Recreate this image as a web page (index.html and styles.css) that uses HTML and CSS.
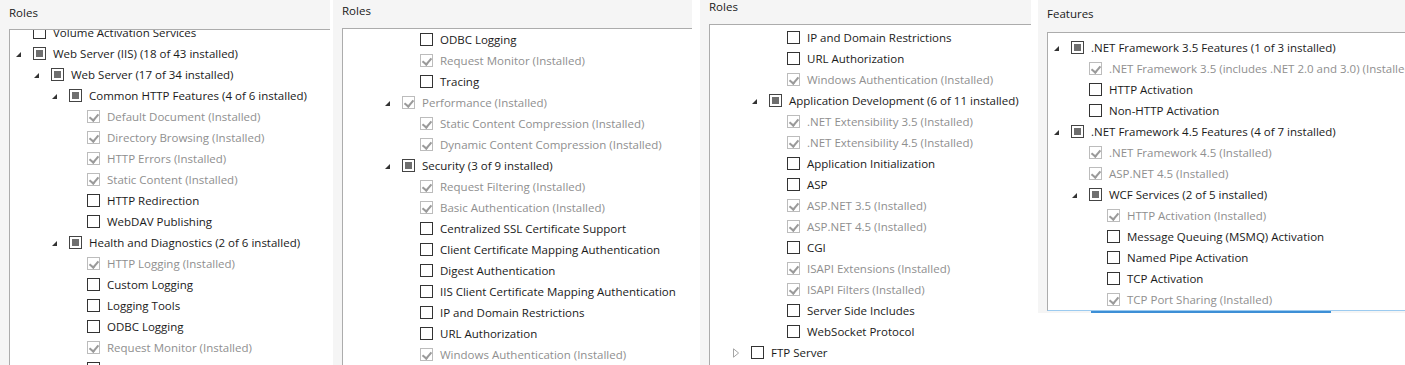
FILE: index.html
```html
<!DOCTYPE html>
<html>
<head>
<meta charset="utf-8">
<link rel="stylesheet" href="styles.css">
</head>
<body>
<div class="strip">

  <section class="panel p1">
    <div class="title">Roles</div>
    <div class="box">
      <ul class="tree">
        <li class="row l1"><span class="exp"></span><span class="cb"></span><span class="txt">Volume Activation Services</span></li>
        <li class="row l1"><span class="exp open"></span><span class="cb ind"></span><span class="txt">Web Server (IIS) (18 of 43 installed)</span></li>
        <li class="row l2"><span class="exp open"></span><span class="cb ind"></span><span class="txt">Web Server (17 of 34 installed)</span></li>
        <li class="row l3"><span class="exp open"></span><span class="cb ind"></span><span class="txt">Common HTTP Features (4 of 6 installed)</span></li>
        <li class="row l4 off"><span class="exp"></span><span class="cb chk"></span><span class="txt">Default Document (Installed)</span></li>
        <li class="row l4 off"><span class="exp"></span><span class="cb chk"></span><span class="txt">Directory Browsing (Installed)</span></li>
        <li class="row l4 off"><span class="exp"></span><span class="cb chk"></span><span class="txt">HTTP Errors (Installed)</span></li>
        <li class="row l4 off"><span class="exp"></span><span class="cb chk"></span><span class="txt">Static Content (Installed)</span></li>
        <li class="row l4"><span class="exp"></span><span class="cb"></span><span class="txt">HTTP Redirection</span></li>
        <li class="row l4"><span class="exp"></span><span class="cb"></span><span class="txt">WebDAV Publishing</span></li>
        <li class="row l3"><span class="exp open"></span><span class="cb ind"></span><span class="txt">Health and Diagnostics (2 of 6 installed)</span></li>
        <li class="row l4 off"><span class="exp"></span><span class="cb chk"></span><span class="txt">HTTP Logging (Installed)</span></li>
        <li class="row l4"><span class="exp"></span><span class="cb"></span><span class="txt">Custom Logging</span></li>
        <li class="row l4"><span class="exp"></span><span class="cb"></span><span class="txt">Logging Tools</span></li>
        <li class="row l4"><span class="exp"></span><span class="cb"></span><span class="txt">ODBC Logging</span></li>
        <li class="row l4 off"><span class="exp"></span><span class="cb chk"></span><span class="txt">Request Monitor (Installed)</span></li>
        <li class="row l4"><span class="exp"></span><span class="cb"></span><span class="txt">Tracing</span></li>
      </ul>
    </div>
  </section>

  <section class="panel p2">
    <div class="title">Roles</div>
    <div class="box">
      <ul class="tree">
        <li class="row l4"><span class="exp"></span><span class="cb"></span><span class="txt">ODBC Logging</span></li>
        <li class="row l4 off"><span class="exp"></span><span class="cb chk"></span><span class="txt">Request Monitor (Installed)</span></li>
        <li class="row l4"><span class="exp"></span><span class="cb"></span><span class="txt">Tracing</span></li>
        <li class="row l3 off"><span class="exp open"></span><span class="cb chk"></span><span class="txt">Performance (Installed)</span></li>
        <li class="row l4 off"><span class="exp"></span><span class="cb chk"></span><span class="txt">Static Content Compression (Installed)</span></li>
        <li class="row l4 off"><span class="exp"></span><span class="cb chk"></span><span class="txt">Dynamic Content Compression (Installed)</span></li>
        <li class="row l3"><span class="exp open"></span><span class="cb ind"></span><span class="txt">Security (3 of 9 installed)</span></li>
        <li class="row l4 off"><span class="exp"></span><span class="cb chk"></span><span class="txt">Request Filtering (Installed)</span></li>
        <li class="row l4 off"><span class="exp"></span><span class="cb chk"></span><span class="txt">Basic Authentication (Installed)</span></li>
        <li class="row l4"><span class="exp"></span><span class="cb"></span><span class="txt">Centralized SSL Certificate Support</span></li>
        <li class="row l4"><span class="exp"></span><span class="cb"></span><span class="txt">Client Certificate Mapping Authentication</span></li>
        <li class="row l4"><span class="exp"></span><span class="cb"></span><span class="txt">Digest Authentication</span></li>
        <li class="row l4"><span class="exp"></span><span class="cb"></span><span class="txt">IIS Client Certificate Mapping Authentication</span></li>
        <li class="row l4"><span class="exp"></span><span class="cb"></span><span class="txt">IP and Domain Restrictions</span></li>
        <li class="row l4"><span class="exp"></span><span class="cb"></span><span class="txt">URL Authorization</span></li>
        <li class="row l4 off"><span class="exp"></span><span class="cb chk"></span><span class="txt">Windows Authentication (Installed)</span></li>
      </ul>
    </div>
  </section>

  <section class="panel p3">
    <div class="title">Roles</div>
    <div class="box">
      <ul class="tree">
        <li class="row l4"><span class="exp"></span><span class="cb"></span><span class="txt">IP and Domain Restrictions</span></li>
        <li class="row l4"><span class="exp"></span><span class="cb"></span><span class="txt">URL Authorization</span></li>
        <li class="row l4 off"><span class="exp"></span><span class="cb chk"></span><span class="txt">Windows Authentication (Installed)</span></li>
        <li class="row l3"><span class="exp open"></span><span class="cb ind"></span><span class="txt">Application Development (6 of 11 installed)</span></li>
        <li class="row l4 off"><span class="exp"></span><span class="cb chk"></span><span class="txt">.NET Extensibility 3.5 (Installed)</span></li>
        <li class="row l4 off"><span class="exp"></span><span class="cb chk"></span><span class="txt">.NET Extensibility 4.5 (Installed)</span></li>
        <li class="row l4"><span class="exp"></span><span class="cb"></span><span class="txt">Application Initialization</span></li>
        <li class="row l4"><span class="exp"></span><span class="cb"></span><span class="txt">ASP</span></li>
        <li class="row l4 off"><span class="exp"></span><span class="cb chk"></span><span class="txt">ASP.NET 3.5 (Installed)</span></li>
        <li class="row l4 off"><span class="exp"></span><span class="cb chk"></span><span class="txt">ASP.NET 4.5 (Installed)</span></li>
        <li class="row l4"><span class="exp"></span><span class="cb"></span><span class="txt">CGI</span></li>
        <li class="row l4 off"><span class="exp"></span><span class="cb chk"></span><span class="txt">ISAPI Extensions (Installed)</span></li>
        <li class="row l4 off"><span class="exp"></span><span class="cb chk"></span><span class="txt">ISAPI Filters (Installed)</span></li>
        <li class="row l4"><span class="exp"></span><span class="cb"></span><span class="txt">Server Side Includes</span></li>
        <li class="row l4"><span class="exp"></span><span class="cb"></span><span class="txt">WebSocket Protocol</span></li>
        <li class="row l2"><span class="exp closed"><svg width="7" height="10" viewBox="0 0 7 10"><path d="M0.5 0.8 L5.6 5 L0.5 9.2 Z" fill="none" stroke="#a4a4a4" stroke-width="1"/></svg></span><span class="cb"></span><span class="txt">FTP Server</span></li>
      </ul>
    </div>
  </section>

  <section class="panel p4">
    <div class="title">Features</div>
    <div class="box">
      <ul class="tree">
        <li class="row l1"><span class="exp open"></span><span class="cb ind"></span><span class="txt">.NET Framework 3.5 Features (1 of 3 installed)</span></li>
        <li class="row l2 off"><span class="exp"></span><span class="cb chk"></span><span class="txt">.NET Framework 3.5 (includes .NET 2.0 and 3.0) (Installed)</span></li>
        <li class="row l2"><span class="exp"></span><span class="cb"></span><span class="txt">HTTP Activation</span></li>
        <li class="row l2"><span class="exp"></span><span class="cb"></span><span class="txt">Non-HTTP Activation</span></li>
        <li class="row l1"><span class="exp open"></span><span class="cb ind"></span><span class="txt">.NET Framework 4.5 Features (4 of 7 installed)</span></li>
        <li class="row l2 off"><span class="exp"></span><span class="cb chk"></span><span class="txt">.NET Framework 4.5 (Installed)</span></li>
        <li class="row l2 off"><span class="exp"></span><span class="cb chk"></span><span class="txt">ASP.NET 4.5 (Installed)</span></li>
        <li class="row l2"><span class="exp open"></span><span class="cb ind"></span><span class="txt">WCF Services (2 of 5 installed)</span></li>
        <li class="row l3 off"><span class="exp"></span><span class="cb chk"></span><span class="txt">HTTP Activation (Installed)</span></li>
        <li class="row l3"><span class="exp"></span><span class="cb"></span><span class="txt">Message Queuing (MSMQ) Activation</span></li>
        <li class="row l3"><span class="exp"></span><span class="cb"></span><span class="txt">Named Pipe Activation</span></li>
        <li class="row l3"><span class="exp"></span><span class="cb"></span><span class="txt">TCP Activation</span></li>
        <li class="row l3 off"><span class="exp"></span><span class="cb chk"></span><span class="txt">TCP Port Sharing (Installed)</span></li>
      </ul>
    </div>
    <div class="focusbar"></div>
  </section>

</div>
</body>
</html>
```

FILE: styles.css
```css
* { box-sizing: border-box; }
html, body { margin: 0; padding: 0; background: #ffffff; }
body {
  font-family: "Segoe UI", "Open Sans", "Noto Sans", sans-serif;
  font-size: 11.5px;
  color: #1a1a1a;
  width: 1405px;
  height: 365px;
  overflow: hidden;
}
.strip { display: flex; align-items: flex-start; height: 365px; }

.panel {
  background: #f5f5f5;
  padding-left: 9px;
  overflow: hidden;
  display: flex;
  flex-direction: column;
}
.p1 { width: 330px; height: 365px; padding-top: 5px; }
.p2 { width: 359px; height: 365px; margin-left: 3px; padding-top: 3px; }
.p3 { width: 331px; height: 365px; margin-left: 8px; padding-top: 0; }
.p4 { width: 367px; height: 313px; margin-left: 7px; padding-top: 6px; }

.title { line-height: 16px; height: 16px; margin-bottom: 9px; color: #1a1a1a; }
.p1 .title { margin-bottom: 8px; }
.p3 .title { line-height: 14px; height: 14px; margin-bottom: 10px; }
.p4 .title { margin-bottom: 10px; }

.box {
  flex: 1;
  background: #ffffff;
  border: 1px solid #acacac;
  border-right: 0;
  border-bottom: 0;
  overflow: hidden;
}
.p4 .box { flex: none; height: 279px; border-bottom: 1px solid #9ccbf0; }

.tree { list-style: none; margin: 0; padding: 0; }
.p1 .tree { margin-top: -8px; }
.p2 .tree { padding-top: 0; }
.p3 .tree { padding-top: 2px; }
.p4 .tree { padding-top: 4px; }

.row { display: flex; align-items: center; height: 21px; white-space: nowrap; }
.l1 { padding-left: 5px; }
.l2 { padding-left: 23px; }
.l3 { padding-left: 41px; }
.l4 { padding-left: 59px; }
.off .txt { color: #8f8f8f; }

.exp { width: 18px; height: 21px; flex: none; position: relative; display: flex; align-items: center; }
.exp.open::before {
  content: "";
  position: absolute;
  left: 1px; top: 9px;
  width: 0; height: 0;
  border-left: 5px solid transparent;
  border-bottom: 5px solid #333333;
}
.exp.closed svg { display: block; margin-top: 1px; }

.cb {
  width: 13px; height: 13px; flex: none;
  border: 1px solid #333333;
  background: #ffffff;
  margin-right: 7px;
  position: relative;
}
.cb.ind { border-color: #444444; }
.cb.ind::before {
  content: "";
  position: absolute;
  left: 2px; top: 2px; width: 7px; height: 7px;
  background: #6f6f6f;
}
.cb.chk { border-color: #bcbcbc; }
.cb.chk::before {
  content: "";
  position: absolute;
  left: 3px; top: 1px;
  width: 4px; height: 7px;
  border-right: 2px solid #9a9a9a;
  border-bottom: 2px solid #9a9a9a;
  transform: rotate(40deg);
}

.txt { line-height: 21px; }

.focusbar {
  height: 2px;
  width: 240px;
  margin-left: 44px;
  background: #3d8fd6;
}
```
